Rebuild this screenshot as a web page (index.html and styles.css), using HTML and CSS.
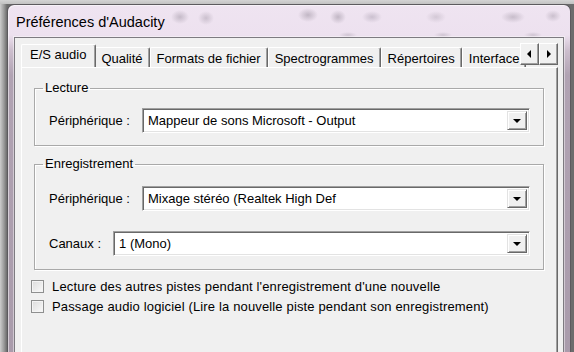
FILE: index.html
```html
<!DOCTYPE html>
<html lang="fr">
<head>
    <meta charset="UTF-8">
    <title>Préférences d'Audacity</title>
    <link rel="stylesheet" href="styles.css">
</head>
<body>

<div class="window">
    <div class="titlebar">Préférences d'Audacity</div>

    <div class="client">
        <div class="tabrow">
            <div class="tab active">E/S audio</div>
            <div class="tab">Qualité</div>
            <div class="tab">Formats de fichier</div>
            <div class="tab">Spectrogrammes</div>
            <div class="tab">Répertoires</div>
            <div class="tab">Interface</div>
            <!-- scroll arrows sit over the clipped tabs -->
            <div class="scroller">
                <span class="arrow left"></span>
                <span class="arrow right"></span>
            </div>
        </div>

        <div class="panel">
            <fieldset class="group">
                <legend>Lecture</legend>
                <div class="row">
                    <span class="label">Périphérique :</span>
                    <div class="combo">
                        <span class="value">Mappeur de sons Microsoft - Output</span>
                        <span class="drop"></span>
                    </div>
                </div>
            </fieldset>

            <fieldset class="group rec">
                <legend>Enregistrement</legend>
                <div class="row">
                    <span class="label">Périphérique :</span>
                    <div class="combo">
                        <span class="value">Mixage stéréo (Realtek High Def</span>
                        <span class="drop"></span>
                    </div>
                </div>
                <div class="row">
                    <span class="label">Canaux :</span>
                    <div class="combo">
                        <span class="value">1 (Mono)</span>
                        <span class="drop"></span>
                    </div>
                </div>
            </fieldset>

            <div class="checks">
                <label class="check"><span class="box"></span>Lecture des autres pistes pendant l'enregistrement d'une nouvelle</label>
                <label class="check"><span class="box"></span>Passage audio logiciel (Lire la nouvelle piste pendant son enregistrement)</label>
            </div>
        </div>
    </div>
</div>

</body>
</html>
```

FILE: styles.css
```css
html, body {
    margin: 0;
    padding: 0;
}
body {
    width: 574px;
    height: 352px;
    overflow: hidden;
    font-family: "Liberation Sans", Arial, sans-serif;
    font-size: 13px;
    color: #000;
    background:
        linear-gradient(to bottom, #d4d4d4 0, #c2c2c2 4px, transparent 4px),
        linear-gradient(to right, #cdcdcd 0, #9a9a9a 4px, #6c6c6c 7px, #6c6c6c 100%);
}

/* window frame */
.window {
    margin: 4px 0 0 7px;
    width: 550px;
    height: 360px;
    border: 1px solid #5c5a5e;
    border-bottom: none;
    border-radius: 7px 7px 0 0;
    padding: 0 6px;
    background:
        radial-gradient(ellipse 9px 7px at 172px 12px, rgba(120, 110, 125, 0.35), transparent),
        radial-gradient(ellipse 8px 7px at 198px 13px, rgba(120, 110, 125, 0.3), transparent),
        radial-gradient(ellipse 10px 7px at 300px 10px, rgba(110, 100, 115, 0.35), transparent),
        radial-gradient(ellipse 8px 7px at 330px 12px, rgba(110, 100, 115, 0.35), transparent),
        radial-gradient(ellipse 10px 6px at 364px 12px, rgba(120, 110, 130, 0.3), transparent),
        radial-gradient(ellipse 10px 6px at 428px 12px, rgba(130, 120, 135, 0.25), transparent),
        radial-gradient(ellipse 12px 6px at 505px 12px, rgba(110, 100, 115, 0.3), transparent),
        radial-gradient(ellipse 8px 6px at 545px 11px, rgba(120, 110, 125, 0.3), transparent),
        radial-gradient(ellipse 9px 3px at 340px 30px, rgba(120, 110, 125, 0.25), transparent),
        radial-gradient(ellipse 9px 3px at 435px 30px, rgba(120, 110, 125, 0.25), transparent),
        radial-gradient(ellipse 9px 3px at 525px 30px, rgba(120, 110, 125, 0.25), transparent),
        linear-gradient(to bottom, #efe4f1 0, #ede1ef 30px, #cdbfce 45px, #b1a3b3 70px, #a99bab 100%);
    box-shadow: inset 1px 1px 0 rgba(255, 255, 255, 0.5);
}
.titlebar {
    height: 32px;
    line-height: 34px;
    padding-left: 2px;
    font-size: 14.5px;
    color: #000;
    white-space: nowrap;
}

/* client area */
.client {
    height: 320px;
    border: 1px solid #7d7a80;
    background: #f0f0f0;
    padding: 5px 5px 0 6px;
    box-shadow: 0 0 0 1px rgba(255, 255, 255, 0.45);
}

/* tab strip */
.tabrow {
    position: relative;
    display: flex;
    align-items: flex-end;
    height: 24px;
    padding-left: 2px;
    overflow: hidden;
    z-index: 1;
}
.tab {
    flex: none;
    height: 19px;
    line-height: 21px;
    padding: 0 6px;
    border-top: 1px solid #fff;
    border-left: 1px solid #fff;
    border-right: 1px solid #696969;
    border-radius: 2px 2px 0 0;
    box-shadow: inset -1px 0 0 #a0a0a0;
    white-space: nowrap;
}
.tab.active {
    position: relative;
    height: 23px;
    line-height: 19px;
    margin: 0 -2px -1px -2px;
    padding: 0 9px 0 8px;
    background: #f0f0f0;
    z-index: 2;
}
.scroller {
    position: absolute;
    right: 0;
    top: 0;
    display: flex;
    background: #f0f0f0;
    z-index: 3;
}
.arrow {
    position: relative;
    width: 17px;
    height: 20px;
    background: #f0f0f0;
    border-top: 1px solid #fff;
    border-left: 1px solid #fff;
    border-right: 1px solid #696969;
    border-bottom: 1px solid #696969;
    box-shadow: inset -1px -1px 0 #a0a0a0;
}
.arrow::after {
    content: "";
    position: absolute;
    top: 6px;
    width: 0;
    height: 0;
    border-top: 4px solid transparent;
    border-bottom: 4px solid transparent;
}
.arrow.left::after {
    left: 6px;
    border-right: 4px solid #000;
}
.arrow.right::after {
    left: 7px;
    border-left: 4px solid #000;
}

/* tab page */
.panel {
    height: 290px;
    border-top: 1px solid #fff;
    border-left: 1px solid #fff;
    border-right: 1px solid #696969;
    box-shadow: inset -1px 0 0 #a0a0a0;
    padding: 12px 13px 0 9px;
}

.group {
    margin: 0 0 0 3px;
    padding: 0 13px 12px 14px;
    border: 1px solid #a9a9a9;
    box-shadow: inset 1px 1px 0 #fff, 1px 1px 0 #fff;
}
.group legend {
    margin-left: -6px;
    padding: 0 2px;
    line-height: 16px;
}
.group.rec {
    margin-top: 10px;
    padding-bottom: 13px;
}
.row {
    display: flex;
    align-items: center;
    margin-top: 12px;
}
.group.rec .row {
    margin-top: 14px;
}
.group.rec .row + .row {
    margin-top: 20px;
}
.label {
    flex: none;
    margin-right: 12px;
    white-space: nowrap;
}

/* drop-down list */
.combo {
    flex: 1;
    display: flex;
    align-items: center;
    height: 19px;
    padding: 2px;
    background: #fff;
    border-top: 1px solid #a0a0a0;
    border-left: 1px solid #a0a0a0;
    border-right: 1px solid #fff;
    border-bottom: 1px solid #fff;
    box-shadow: inset 1px 1px 0 #696969, inset -1px -1px 0 #e3e3e3;
}
.combo .value {
    flex: 1;
    padding-left: 3px;
    white-space: nowrap;
    overflow: hidden;
}
.combo .drop {
    position: relative;
    width: 18px;
    height: 17px;
    background: #f0f0f0;
    border-top: 1px solid #e3e3e3;
    border-left: 1px solid #e3e3e3;
    border-right: 1px solid #696969;
    border-bottom: 1px solid #696969;
    box-shadow: inset 1px 1px 0 #fff, inset -1px -1px 0 #a0a0a0;
}
.combo .drop::after {
    content: "";
    position: absolute;
    left: 5px;
    top: 7px;
    border-left: 4px solid transparent;
    border-right: 4px solid transparent;
    border-top: 4px solid #000;
}

/* check boxes */
.checks {
    display: flex;
    flex-direction: column;
    gap: 6px;
    margin-top: 9px;
    letter-spacing: 0.15px;
}
.check {
    display: flex;
    align-items: center;
    gap: 8px;
    height: 14px;
    white-space: nowrap;
}
.box {
    flex: none;
    width: 11px;
    height: 11px;
    border: 1px solid #8e8f8f;
    background: linear-gradient(135deg, #dcdcdc, #fafafa);
    box-shadow: inset 0 0 0 1px #f4f4f4;
}
```
